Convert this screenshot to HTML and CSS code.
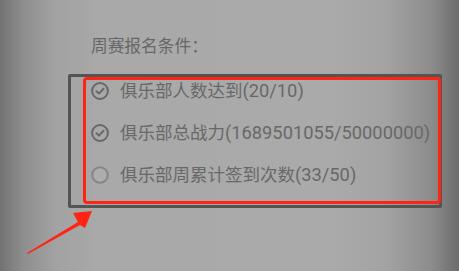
FILE: index.html
```html
<!DOCTYPE html>
<html lang="zh">
<head>
<meta charset="utf-8">
<link rel="stylesheet" href="styles.css">
</head>
<body>
<div class="page">
  <div class="title">周赛报名条件<span class="colon">：</span></div>
  <div class="box">
    <div class="row">
      <svg class="icon" viewBox="0 0 18 18"><circle cx="9" cy="9" r="7.9" fill="none" stroke="#686868" stroke-width="2"/><path d="M5.5 9.3 L8 11.6 L12.5 6.8" fill="none" stroke="#686868" stroke-width="2" stroke-linecap="round" stroke-linejoin="round"/></svg>
      <span class="text">俱乐部人数达到<span class="num">(20/10)</span></span>
    </div>
    <div class="row">
      <svg class="icon" viewBox="0 0 18 18"><circle cx="9" cy="9" r="7.9" fill="none" stroke="#686868" stroke-width="2"/><path d="M5.5 9.3 L8 11.6 L12.5 6.8" fill="none" stroke="#686868" stroke-width="2" stroke-linecap="round" stroke-linejoin="round"/></svg>
      <span class="text">俱乐部总战力<span class="num">(1689501055/50000000)</span></span>
    </div>
    <div class="row">
      <svg class="icon" viewBox="0 0 18 18"><circle cx="9" cy="9" r="7.8" fill="#adadad" stroke="#868686" stroke-width="2"/></svg>
      <span class="text">俱乐部周累计签到次数<span class="num">(33/50)</span></span>
    </div>
    <div class="highlight"></div>
  </div>
  <svg class="arrow" viewBox="0 0 459 271" width="459" height="271">
    <polygon points="27,253 78,222 73,213 92,211 85,228 80,225 28,254" fill="#ff2414"/>
  </svg>
</div>
</body>
</html>
```
FILE: styles.css
```css
html, body {
  margin: 0;
  padding: 0;
}
body {
  width: 459px;
  height: 271px;
  overflow: hidden;
  background: linear-gradient(to right, #727272 0%, #8e8e8e 5%, #a2a2a2 12%, #a9a9a9 22%, #aaaaaa 72%, #a3a3a3 84%, #8c8c8c 94%, #6c6c6c 100%);
  font-family: Roboto, "Noto Sans CJK SC", sans-serif;
}
.page {
  position: relative;
  width: 459px;
  height: 271px;
  padding-top: 33px;
  box-sizing: border-box;
}
.title {
  margin-left: 91px;
  font-size: 16.7px;
  line-height: 24px;
  color: #676767;
}
.colon {
  font-family: "Noto Sans CJK TC", sans-serif;
}
.box {
  position: relative;
  margin-left: 68px;
  margin-top: 15px;
  width: 374px;
  height: 134px;
  box-sizing: border-box;
  border: 3px solid #545454;
  border-radius: 2px;
  display: flex;
  flex-direction: column;
  gap: 16px;
  padding-left: 20px;
}
.row {
  display: flex;
  align-items: center;
  height: 26px;
  gap: 11px;
}
.icon {
  width: 18px;
  height: 18px;
  flex: none;
  margin-top: 2px;
}
.text {
  font-family: "Noto Sans CJK SC", sans-serif;
  font-size: 17.5px;
  line-height: 26px;
  color: #686868;
  white-space: nowrap;
}
.num {
  font-family: Roboto, sans-serif;
  font-size: 18.3px;
}
.highlight {
  position: absolute;
  left: 12px;
  top: 0;
  width: 358px;
  height: 127px;
  box-sizing: border-box;
  border: 3px solid #ff2414;
  border-radius: 4px;
}
.arrow {
  position: absolute;
  left: 0;
  top: 0;
}
```
